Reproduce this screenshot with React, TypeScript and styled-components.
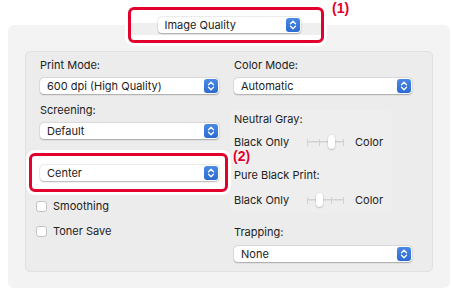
import styled, { createGlobalStyle } from 'styled-components';

const GlobalStyle = createGlobalStyle`
    html, body {
        margin: 0;
        padding: 0;
        background: #ffffff;
    }
    body {
        font-family: Inter, 'Noto Sans', sans-serif;
        font-size: 11px;
        color: #222222;
        -webkit-font-smoothing: antialiased;
    }
`;

const Page = styled.div`
    position: relative;
    width: 452px;
    height: 301px;
    padding: 25px 0 0 8px;
    box-sizing: border-box;
    overflow: hidden;
`;

const Panel = styled.div`
    width: 442px;
    height: 263px;
    background: #f3f3f3;
    border-radius: 6px;
    padding: 0 17px;
    box-sizing: border-box;
    display: flex;
    flex-direction: column;
`;

const HeaderRow = styled.div`
    display: flex;
    justify-content: center;
    margin-top: -8px;
`;

const Group = styled.div`
    margin-top: 18px;
    height: 221px;
    box-sizing: border-box;
    background: #ececec;
    border: 1px solid #e1e1e1;
    border-radius: 5px;
    padding: 6px 0 0 14px;
    display: grid;
    grid-template-columns: 179px 178px;
    column-gap: 15px;
    align-items: start;
`;

const Column = styled.div`
    display: flex;
    flex-direction: column;
`;

const Label = styled.div<{ $mt?: number }>`
    height: 14px;
    line-height: 14px;
    margin-top: ${(p) => p.$mt ?? 0}px;
    white-space: nowrap;
`;

const PopUp = styled.div<{ $width?: number; $mt?: number; $raised?: boolean }>`
    position: relative;
    z-index: ${(p) => (p.$raised ? 3 : 'auto')};
    width: ${(p) => (p.$width ? `${p.$width}px` : '100%')};
    height: 16px;
    margin-top: ${(p) => p.$mt ?? 0}px;
    box-sizing: border-box;
    background: #ffffff;
    border-radius: 4px;
    box-shadow: 0 0.5px 1.5px rgba(0, 0, 0, 0.28), 0 0 0 0.5px rgba(0, 0, 0, 0.06);
    display: flex;
    align-items: center;
    justify-content: space-between;
    padding: 0 1px 0 7px;
`;

const PopText = styled.span`
    line-height: 16px;
    white-space: nowrap;
`;

const Stepper = styled.span`
    width: 14px;
    height: 14px;
    border-radius: 3px;
    background: linear-gradient(#4a8ae4, #2c6bcf);
    display: flex;
    align-items: center;
    justify-content: center;
`;

const CheckRow = styled.label<{ $mt?: number }>`
    display: flex;
    align-items: center;
    gap: 6px;
    height: 14px;
    margin-top: ${(p) => p.$mt ?? 0}px;
    margin-left: -4px;
`;

const CheckBox = styled.span`
    width: 11px;
    height: 11px;
    box-sizing: border-box;
    background: #ffffff;
    border: 1px solid #c4c4c4;
    border-radius: 3px;
`;

const SubGroup = styled.div<{ $mt?: number }>`
    margin-top: ${(p) => p.$mt ?? 0}px;
    margin-left: -4px;
    width: 162px;
    padding: 2px 0 5px 4px;
    box-sizing: border-box;
    background: #eeeeee;
    border-radius: 4px;
    display: flex;
    flex-direction: column;
`;

const SliderRow = styled.div<{ $mt?: number }>`
    display: flex;
    align-items: center;
    height: 16px;
    margin-top: ${(p) => p.$mt ?? 0}px;
`;

const SliderEnd = styled.span`
    width: 73px;
    white-space: nowrap;
`;

const Track = styled.div`
    position: relative;
    width: 37px;
    height: 16px;
    margin-right: 11px;
    display: flex;
    align-items: center;
    justify-content: space-between;
    background: linear-gradient(#d2d2d2, #d2d2d2) center / 100% 1.5px no-repeat;
`;

const Tick = styled.span`
    width: 1px;
    height: 7px;
    background: #d2d2d2;
`;

const Thumb = styled.span`
    position: absolute;
    top: 1px;
    width: 7px;
    height: 14px;
    margin-left: -3px;
    background: #ffffff;
    border-radius: 4px;
    box-shadow: 0 0.5px 1.5px rgba(0, 0, 0, 0.35);
`;

const Callout = styled.div<{ $x: number; $y: number; $w: number; $h: number }>`
    position: absolute;
    z-index: 2;
    left: ${(p) => p.$x}px;
    top: ${(p) => p.$y}px;
    width: ${(p) => p.$w}px;
    height: ${(p) => p.$h}px;
    box-sizing: border-box;
    border: 3px solid #e2002d;
    border-radius: 6px;
    background: #ffffff;
    box-shadow: 0 0 0 3px #ffffff;
`;

const HeaderCallout = styled(Callout)`
    background: linear-gradient(#ffffff 0 13px, #efefef 13px 25px, #ffffff 25px);
`;

const CalloutNum = styled.span<{ $x: number; $y: number }>`
    position: absolute;
    z-index: 4;
    left: ${(p) => p.$x}px;
    top: ${(p) => p.$y}px;
    font-family: 'Liberation Sans', Arial, sans-serif;
    font-weight: 700;
    font-size: 14px;
    line-height: 14px;
    color: #e2002d;
    text-shadow: 0 0 2px #ffffff, 0 0 2px #ffffff;
`;

const Chevrons = () => (
    <svg width="8" height="10" viewBox="0 0 8 10" fill="none">
        <path d="M1.5 3.8 L4 1.3 L6.5 3.8" stroke="#fff" strokeWidth="1.3" strokeLinecap="round" strokeLinejoin="round" />
        <path d="M1.5 6.2 L4 8.7 L6.5 6.2" stroke="#fff" strokeWidth="1.3" strokeLinecap="round" strokeLinejoin="round" />
    </svg>
);

interface IPop {
    value: string;
    width?: number;
    mt?: number;
    raised?: boolean;
}
const Pop = ({ value, width, mt, raised }: IPop) => (
    <PopUp $width={width} $mt={mt} $raised={raised}>
        <PopText>{value}</PopText>
        <Stepper>
            <Chevrons />
        </Stepper>
    </PopUp>
);

const Slider = ({ value, mt }: { value: number; mt?: number }) => (
    <SliderRow $mt={mt}>
        <SliderEnd>Black Only</SliderEnd>
        <Track>
            {[0, 1, 2, 3].map((i) => (
                <Tick key={i} />
            ))}
            <Thumb style={{ left: `${(value / 3) * 36}px` }} />
        </Track>
        <span>Color</span>
    </SliderRow>
);

export default function App() {
    return (
        <>
            <GlobalStyle />
            <Page>
                <HeaderCallout $x={128} $y={7} $w={196} $h={36} />
                <CalloutNum $x={332} $y={1}>
                    (1)
                </CalloutNum>
                <Callout $x={29} $y={153} $w={199} $h={39} />
                <CalloutNum $x={233} $y={149}>
                    (2)
                </CalloutNum>
                <Panel>
                    <HeaderRow>
                        <Pop value="Image Quality" width={143} raised />
                    </HeaderRow>
                    <Group>
                        <Column>
                            <Label>Print Mode:</Label>
                            <Pop value="600 dpi (High Quality)" mt={6} />
                            <Label $mt={9}>Screening:</Label>
                            <Pop value="Default" mt={6} />
                            <Label $mt={8}>Sharpness:</Label>
                            <Pop value="Center" mt={4} raised />
                            <CheckRow $mt={18}>
                                <CheckBox />
                                Smoothing
                            </CheckRow>
                            <CheckRow $mt={11}>
                                <CheckBox />
                                Toner Save
                            </CheckRow>
                        </Column>
                        <Column>
                            <Label>Color Mode:</Label>
                            <Pop value="Automatic" mt={6} />
                            <SubGroup $mt={16}>
                                <Label>Neutral Gray:</Label>
                                <Slider value={2} mt={8} />
                                <Label $mt={18}>Pure Black Print:</Label>
                                <Slider value={1} mt={10} />
                            </SubGroup>
                            <Label $mt={12}>Trapping:</Label>
                            <Pop value="None" mt={7} />
                        </Column>
                    </Group>
                </Panel>
            </Page>
        </>
    );
}
